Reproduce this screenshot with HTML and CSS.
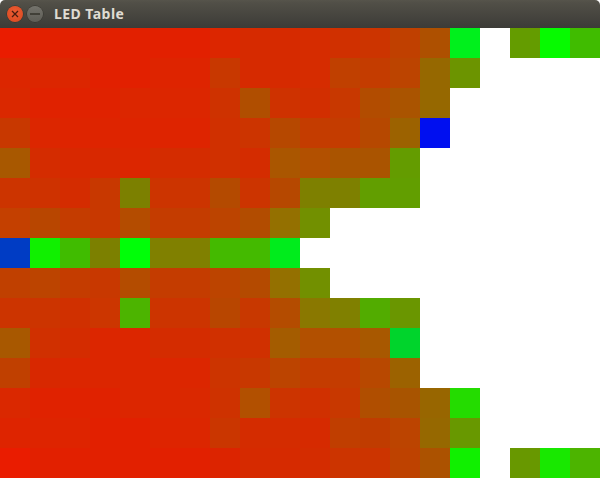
FILE: index.html
```html
<!DOCTYPE html>
<html lang="en">
<head>
<meta charset="utf-8">
<title>LED Table</title>
<link rel="stylesheet" href="styles.css">
</head>
<body>
<div class="window">
  <header class="titlebar">
    <div class="controls">
      <span class="btn btn-close"><svg viewBox="0 0 8 8" width="8" height="8"><path d="M1 1 7 7M7 1 1 7" stroke="#4a1c0e" stroke-width="1.3" fill="none"/></svg></span>
      <span class="btn btn-min"><svg viewBox="0 0 10 2" width="10" height="2"><path d="M0 1H10" stroke="#37362f" stroke-width="1.6" fill="none"/></svg></span>
    </div>
    <span class="title">LED Table</span>
  </header>
  <main class="led-table" id="table"></main>
</div>
<script src="app.js"></script>
</body>
</html>
```

FILE: styles.css
```css
* { box-sizing: border-box; }
html, body { margin: 0; padding: 0; background: #fff; }
.window { width: 600px; height: 478px; overflow: hidden; display: flex; flex-direction: column; background: #fff; }
.titlebar {
  height: 28px; flex: none; display: flex; align-items: center; padding: 0 0 0 7px;
  border-radius: 5px 5px 0 0;
  background: linear-gradient(#56544b 0, #514f47 3px, #3c3b37 100%);
}
.controls { display: flex; gap: 4px; width: 47px; flex: none; }
.btn { width: 16px; height: 16px; border-radius: 50%; display: flex; align-items: center; justify-content: center; }
.btn-close { background: radial-gradient(circle at 50% 40%, #ee5c33, #d8481f); box-shadow: 0 0 0 .5px #33322c; }
.btn-min { background: linear-gradient(#74736c, #5e5d56); box-shadow: 0 0 0 .5px #33322c; }
.title { font: 700 14px/1 "Noto Sans", sans-serif; letter-spacing: .45px; color: #dfdbd2; }
.led-table { display: grid; grid-template-columns: repeat(20, 30px); grid-auto-rows: 30px; flex: none; }
.led { width: 30px; height: 30px; }
```

FILE: app.js
```js
var rows = [
  "ea1c00 e22000 e22000 e22000 e22000 e22000 e22000 dc2600 d62a00 d62a00 d62c00 d03000 cc3400 c04000 ae5000 00f01c ffffff 649c00 06fa00 40bc00",
  "dc2600 dc2600 dc2600 e22000 e22000 de2400 de2400 c83800 d62a00 d62a00 d62c00 c04000 c43c00 bc4400 966800 6c9400",
  "da2800 e02200 e02200 e02200 dc2600 dc2600 dc2600 ce3200 b04e00 ce3200 d22e00 c83800 b24c00 aa5400 966800",
  "c83800 dc2600 de2400 de2400 de2400 de2400 de2400 d03000 cc3400 b64800 c43c00 c43c00 b64800 9c6200 000ff0",
  "a85800 d42c00 d82800 d82800 dc2600 d42c00 d42c00 d03000 d42c00 aa5600 b25000 aa5400 aa5400 649c00",
  "cc3400 ce3200 d42c00 c83800 7c8000 cc3400 cc3400 b44a00 cc3400 b64800 7e8000 7e8000 629e00 629e00",
  "c44000 b84600 c43c00 c83800 b44c00 c43c00 c43c00 bc4400 b24c00 947000 729000",
  "003cc4 10f000 40bc00 7c8000 00fe08 808000 808000 44ba00 44ba00 00ec1c",
  "c04000 bc4400 c43c00 c83800 b44c00 c43c00 c43c00 bc4400 b44a00 947000 729000",
  "cc3400 cc3400 d03000 cc3600 4cb400 cc3400 cc3400 b84600 c83800 b44c00 8a7800 808000 52ac00 6a9600",
  "a85800 d03000 d42c00 dc2600 dc2600 d42c00 d42c00 d03000 d03000 a45c00 b25000 b25000 a85800 00d42c",
  "c04000 d82800 dc2600 dc2600 dc2600 dc2600 dc2600 cc3400 c83800 bc4400 c43c00 c43c00 b84800 9c6200",
  "da2800 e02200 e02200 e02200 dc2600 dc2600 da2800 ce3200 b25000 cc3400 d03000 c83800 b04e00 a85400 986600 24dc00",
  "de2400 de2400 de2400 e22000 e22000 de2400 dc2600 ca3600 d42c00 d42c00 d62a00 c03e00 c03c00 bc4400 966800 689800",
  "ea1c00 e22000 e22000 e22000 e22000 e22000 e22000 dc2400 d62a00 d62a00 d42c00 cc3400 cc3400 be4200 ac5200 10f000 ffffff 689800 18e800 4cb400"
];
var table = document.getElementById("table");
rows.forEach(function (row) {
  var cells = row.split(" ");
  for (var i = 0; i < 20; i++) {
    var led = document.createElement("div");
    led.className = "led";
    led.style.backgroundColor = "#" + (cells[i] || "ffffff");
    table.appendChild(led);
  }
});
```
